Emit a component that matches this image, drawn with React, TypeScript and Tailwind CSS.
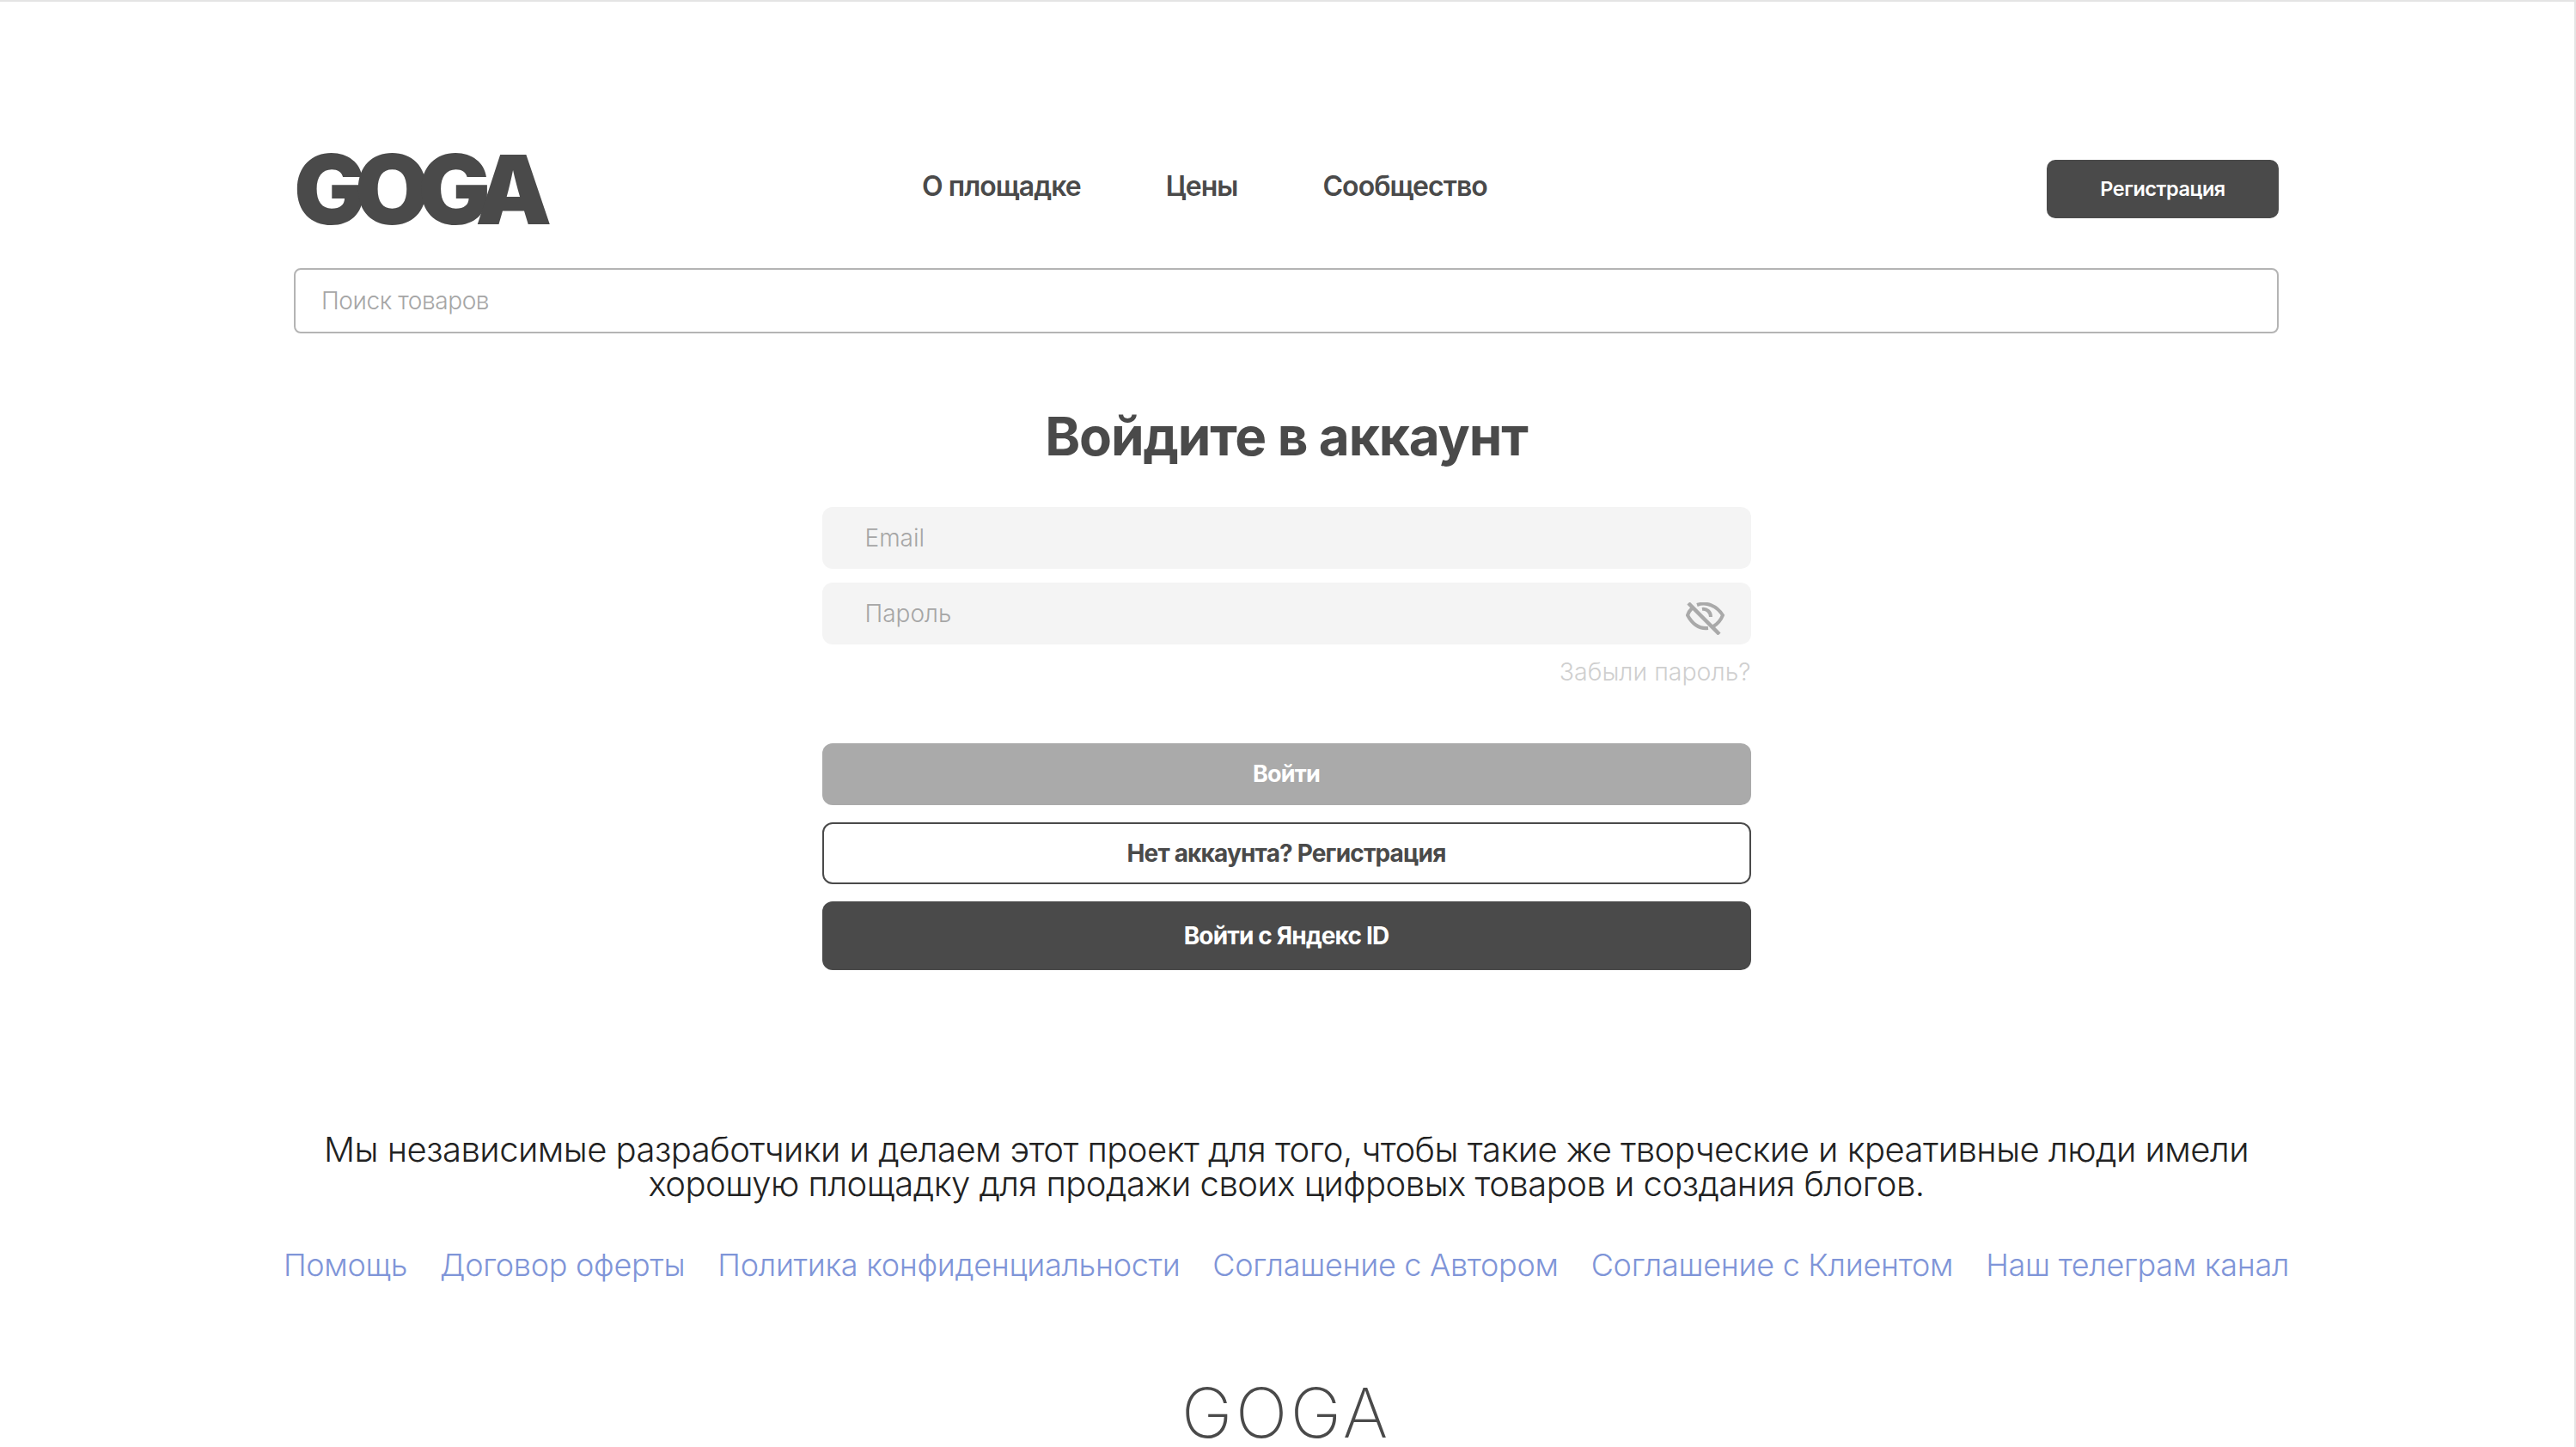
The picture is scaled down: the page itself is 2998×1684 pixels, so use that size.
const font = "font-['Inter','Noto_Sans',sans-serif]";

const EyeOff = () => (
  <svg width="46" height="38" viewBox="0 0 46 38" fill="none" stroke="#a9a9a9" strokeWidth="4">
    <path d="M13 3 C24 -1 36 4 43 15 C41 20 37 25 32 28" />
    <path d="M7 7 C5 9 3 12 2 15 C8 26 16 31 26 30" />
    <path d="M19 8 C24 7 29 11 29 17" />
    <path d="M3 1 L39 37" strokeWidth="4.5" />
  </svg>
);

const links = [
  "Помощь",
  "Договор оферты",
  "Политика конфиденциальности",
  "Соглашение с Автором",
  "Соглашение с Клиентом",
  "Наш телеграм канал",
];

export default function App() {
  return (
    <div className={`${font} h-[1684px] overflow-hidden border-t-2 border-r-2 border-[#e4e4e4] bg-white pr-[2px] text-[#4a4a4a]`}>
      <div className="mx-auto flex w-[2310px] flex-col">
        <header className="flex h-[252px] items-end">
          <div className="relative flex h-[68px] w-full items-center">
            <div className="w-[731px] text-[112px] leading-none font-black tracking-[-0.12em]">GOGA</div>
            <nav className="-mt-[6px] flex gap-[99px] text-[32px] font-semibold tracking-[-0.03em]">
              <a>О площадке</a>
              <a>Цены</a>
              <a>Сообщество</a>
            </nav>
            <button className="ml-auto h-[68px] w-[270px] rounded-[10px] bg-[#4a4a4a] text-[23.5px] font-semibold tracking-[-0.02em] text-white">
              Регистрация
            </button>
          </div>
        </header>
        <div className="mt-[58px] flex h-[76px] items-center rounded-[8px] border-2 border-[#b4b4b4] pl-[30px] text-[28px] font-light tracking-[-0.015em] text-[#a6a6a6]">
          Поиск товаров
        </div>
        <h1 className="mt-[84px] text-center text-[62px] leading-[72px] font-bold tracking-[-0.018em]">Войдите в аккаунт</h1>
        <form className="mx-auto mt-[46px] flex w-[1081px] flex-col">
          <div className="flex h-[72px] items-center rounded-[12px] bg-[#f4f4f4] pl-[50px] text-[28px] font-light text-[#a6a6a6]">
            Email
          </div>
          <div className="mt-[16px] flex h-[72px] items-center justify-between rounded-[12px] bg-[#f4f4f4] pr-[30px] pl-[50px] text-[28px] font-light text-[#a6a6a6]">
            Пароль
            <span className="mt-[12px]"><EyeOff /></span>
          </div>
          <a className="mt-[15px] text-right text-[28.5px] leading-[34px] font-light text-[#cfcfcf]">Забыли пароль?</a>
          <button type="button" className="mt-[66px] h-[72px] rounded-[12px] bg-[#aaaaaa] text-[27px] font-bold tracking-[-0.03em] text-white">
            Войти
          </button>
          <button type="button" className="mt-[20px] h-[72px] rounded-[12px] border-2 border-[#4a4a4a] bg-white text-[28px] font-bold tracking-[-0.03em]">
            Нет аккаунта? Регистрация
          </button>
          <button type="button" className="mt-[20px] h-[80px] rounded-[12px] bg-[#4a4a4a] text-[28px] font-bold tracking-[-0.03em] text-white">
            Войти с Яндекс ID
          </button>
        </form>
        <p className="mt-[189px] text-center text-[40px] leading-[40px] font-light tracking-[-0.013em] whitespace-nowrap text-[#222222]">
          Мы независимые разработчики и делаем этот проект для того, чтобы такие же творческие и креативные люди имели
          <br />
          хорошую площадку для продажи своих цифровых товаров и создания блогов.
        </p>
        <div className="-mx-[40px] mt-[52px] flex justify-center gap-[38px] text-[36px] leading-[44px] font-light tracking-[-0.008em] whitespace-nowrap text-[#7f95d8]">
          {links.map((l) => (
            <a key={l}>{l}</a>
          ))}
        </div>
        <div className="mt-[118px] text-center text-[80px] leading-[64px] font-extralight tracking-[0.045em]">GOGA</div>
      </div>
    </div>
  );
}
